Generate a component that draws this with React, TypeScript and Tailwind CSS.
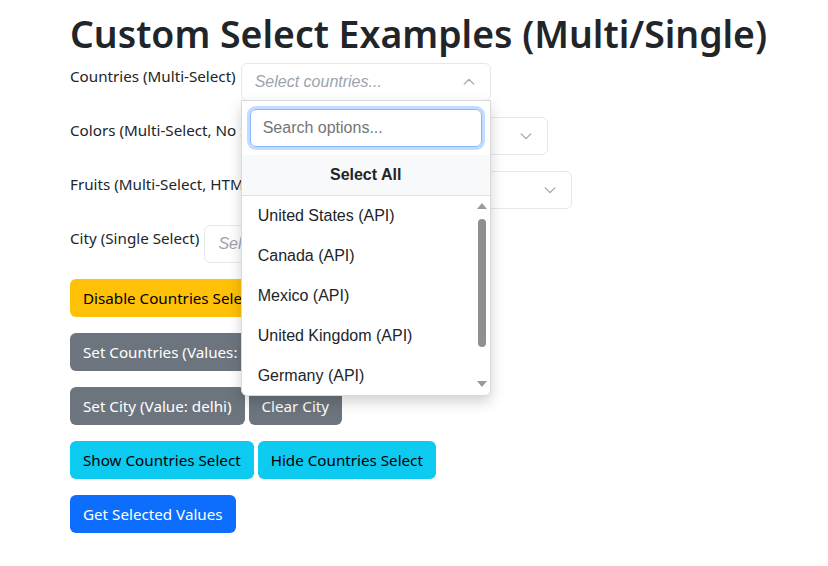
import React from 'react';

const SANS = "font-['Noto_Sans',sans-serif]";
const ARIAL = "font-['Liberation_Sans',Arial,sans-serif]";

const countries = ['United States (API)', 'Canada (API)', 'Mexico (API)', 'United Kingdom (API)', 'Germany (API)'];

const Chevron: React.FC<{ up?: boolean }> = ({ up }) => (
  <svg width="14" height="14" viewBox="0 0 16 16" fill="none" stroke="#9ca3af" strokeWidth="1.4" strokeLinecap="round" strokeLinejoin="round">
    {up ? <path d="M2.5 10.5 8 5l5.5 5.5" /> : <path d="M2.5 5.5 8 11l5.5-5.5" />}
  </svg>
);

const SelectBox: React.FC<{ placeholder: string; open?: boolean; children?: React.ReactNode }> = ({ placeholder, open, children }) => (
  <div className="relative w-[250px] shrink-0">
    <div className="flex h-[38px] items-center justify-between rounded-md border border-[#e5e7eb] bg-white pl-[13px] pr-[14px]">
      <span className={`${ARIAL} italic text-[16px] text-[#9ca3af]`}>{placeholder}</span>
      <Chevron up={open} />
    </div>
    {children}
  </div>
);

const Dropdown: React.FC = () => (
  <div className={`absolute left-0 top-[37px] z-10 w-[250px] rounded-b-md border border-[#d9d9d9] bg-white shadow-[0_6px_14px_rgba(0,0,0,0.18)] ${ARIAL}`}>
    <div className="p-2">
      <div className="flex h-[38px] items-center rounded-md border border-[#86b7fe] px-3 text-[16px] text-[#757575] shadow-[0_0_0_3px_rgba(13,110,253,0.25)]">
        Search options...
      </div>
    </div>
    <div className="flex h-[41px] items-center justify-center border-b border-[#dee2e6] bg-[#f8f9fa] text-[16px] font-bold text-[#212529]">
      Select All
    </div>
    <div className="flex h-[199px]">
      <div className="flex-1">
        {countries.map(c => (
          <div key={c} className="flex h-10 items-center px-4 text-[16px] text-[#212529]">{c}</div>
        ))}
      </div>
      <div className="flex w-[15px] flex-col items-center pt-[7px] pb-[8px]">
        <div className="h-0 w-0 border-x-[5px] border-b-[6px] border-x-transparent border-b-[#9a9a9a]" />
        <div className="mt-[10px] h-[128px] w-2 rounded bg-[#8f8f8f]" />
        <div className="flex-1" />
        <div className="h-0 w-0 border-x-[5px] border-t-[6px] border-x-transparent border-t-[#9a9a9a]" />
      </div>
    </div>
  </div>
);

const Btn: React.FC<{ color: string; children: React.ReactNode }> = ({ color, children }) => (
  <button className={`h-[38px] shrink-0 whitespace-nowrap rounded-md px-[13px] text-[15.2px] ${color}`}>{children}</button>
);

const Row: React.FC<{ label: string; children: React.ReactNode }> = ({ label, children }) => (
  <div className="mb-4 flex items-start gap-[5px]">
    <label className="whitespace-nowrap pt-px text-[15.2px] leading-6 text-[#212529]">{label}</label>
    {children}
  </div>
);

export default function App() {
  return (
    <div className={`min-h-[566px] bg-white px-[70px] text-[#212529] ${SANS}`}>
      <h1 className="mb-[5px] whitespace-nowrap pt-[10px] text-[37.4px] font-semibold leading-[48px] text-[#212529]">Custom Select Examples (Multi/Single)</h1>
      <Row label="Countries (Multi-Select)">
        <SelectBox placeholder="Select countries..." open>
          <Dropdown />
        </SelectBox>
      </Row>
      <Row label="Colors (Multi-Select, No Search)">
        <SelectBox placeholder="Select colors..." />
      </Row>
      <Row label="Fruits (Multi-Select, HTML Options)">
        <SelectBox placeholder="Select fruits..." />
      </Row>
      <Row label="City (Single Select)">
        <SelectBox placeholder="Select city..." />
      </Row>
      <div className="mb-4 flex gap-1">
        <Btn color="bg-[#ffc107] text-black">Disable Countries Select</Btn>
        <Btn color="bg-[#198754] text-white">Enable</Btn>
      </div>
      <div className="mb-4 flex gap-1">
        <Btn color="bg-[#6c757d] text-white">Set Countries (Values: us, ca)</Btn>
      </div>
      <div className="mb-4 flex gap-1">
        <Btn color="bg-[#6c757d] text-white">Set City (Value: delhi)</Btn>
        <Btn color="bg-[#6c757d] text-white">Clear City</Btn>
      </div>
      <div className="mb-4 flex gap-1">
        <Btn color="bg-[#0dcaf0] text-black">Show Countries Select</Btn>
        <Btn color="bg-[#0dcaf0] text-black">Hide Countries Select</Btn>
      </div>
      <div className="flex gap-1">
        <Btn color="bg-[#0d6efd] text-white">Get Selected Values</Btn>
      </div>
    </div>
  );
}
